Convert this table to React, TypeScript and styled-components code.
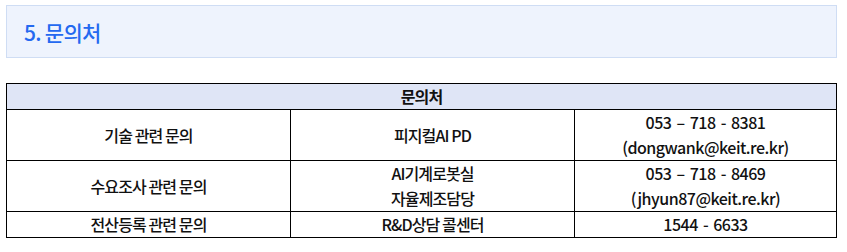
import React from 'react';
import styled, { createGlobalStyle } from 'styled-components';

const GlobalStyle = createGlobalStyle`
  body {
    margin: 0;
    background: #ffffff;
    font-family: 'Noto Sans CJK KR', 'Noto Sans', sans-serif;
  }
`;

interface IContactRow {
  topic: string;
  dept: string[];
  contact: string[];
}

const rows: IContactRow[] = [
  {
    topic: '기술 관련 문의',
    dept: ['피지컬AI PD'],
    contact: ['053 – 718 - 8381', '(dongwank@keit.re.kr)'],
  },
  {
    topic: '수요조사 관련 문의',
    dept: ['AI기계로봇실', '자율제조담당'],
    contact: ['053 – 718 - 8469', '(jhyun87@keit.re.kr)'],
  },
  {
    topic: '전산등록 관련 문의',
    dept: ['R&D상담 콜센터'],
    contact: ['1544 - 6633'],
  },
];

export default function App() {
  return (
    <Page>
      <GlobalStyle />
      <TitleBox>
        <Title>5. 문의처</Title>
      </TitleBox>
      <ContactTable>
        <colgroup>
          <col style={{ width: 284 }} />
          <col style={{ width: 284 }} />
          <col />
        </colgroup>
        <thead>
          <tr>
            <HeadCell colSpan={3}>문의처</HeadCell>
          </tr>
        </thead>
        <tbody>
          {rows.map((row) => (
            <tr key={row.topic}>
              <Cell>{row.topic}</Cell>
              <Cell>
                {row.dept.map((line) => (
                  <Line key={line}>{line}</Line>
                ))}
              </Cell>
              <Cell>
                {row.contact.map((line) => (
                  <Line key={line} $wide>
                    {line}
                  </Line>
                ))}
              </Cell>
            </tr>
          ))}
        </tbody>
      </ContactTable>
    </Page>
  );
}

const Page = styled.div`
  padding: 5px 10px 0 6px;
  display: flex;
  flex-direction: column;
  gap: 25px;
`;

const TitleBox = styled.div`
  height: 53px;
  display: flex;
  align-items: center;
  padding: 2px 0 0 17px;
  box-sizing: border-box;
  background: #eef3fd;
  border: 1px solid #cfddf4;
`;

const Title = styled.h2`
  margin: 0;
  font-size: 21px;
  font-weight: 500;
  letter-spacing: -0.7px;
  color: #2469f0;
  line-height: 1;
`;

const ContactTable = styled.table`
  width: 831px;
  border-collapse: collapse;
  table-layout: fixed;
  border: 1.5px solid #000;
  color: #111111;
  font-size: 16px;
  font-weight: 500;
  letter-spacing: -0.9px;
`;

const HeadCell = styled.th`
  background: #dfe5f6;
  border: 1.5px solid #000;
  height: 25px;
  padding: 0;
  line-height: 25px;
  font-weight: 700;
  text-align: center;
`;

const Cell = styled.td`
  border: 1.5px solid #000;
  padding: 0;
  line-height: 25px;
  text-align: center;
  vertical-align: middle;
`;

const Line = styled.div<{ $wide?: boolean }>`
  line-height: 25px;
  letter-spacing: ${(props) => (props.$wide ? '-0.5px' : 'inherit')};
  word-spacing: ${(props) => (props.$wide ? '2px' : 'normal')};
`;
